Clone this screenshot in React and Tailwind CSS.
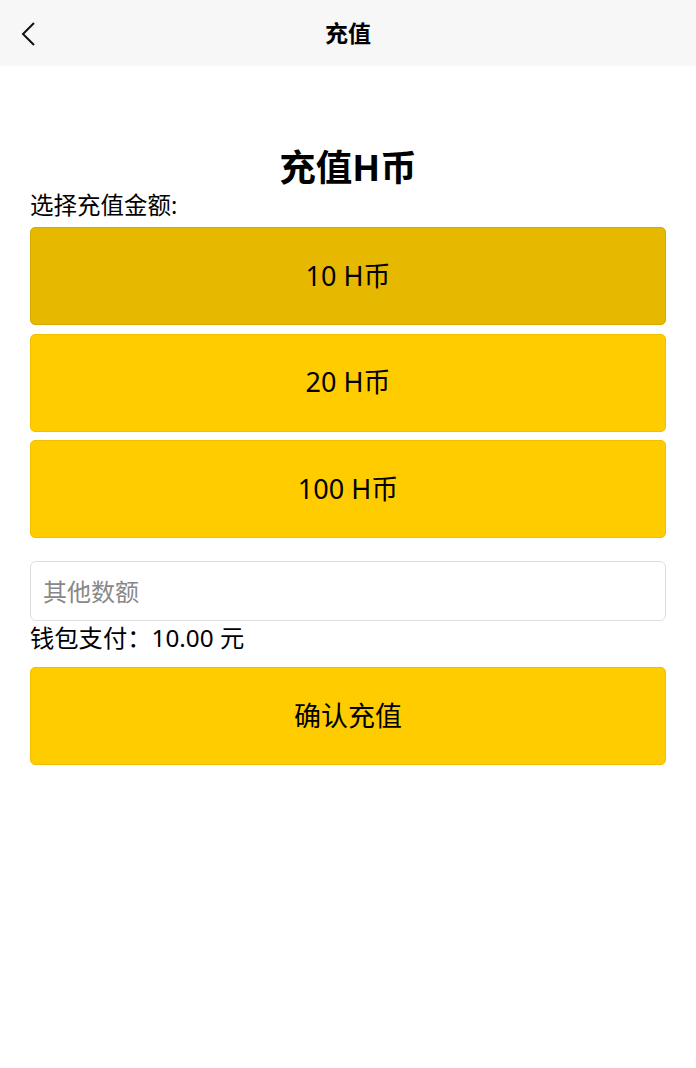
import React, { useState } from 'react'

export default function App() {
  const [amount, setAmount] = useState(10)
  const options = [10, 20, 100]

  return (
    <div className="min-h-[1068px] bg-white text-black" style={{ fontFamily: '"Noto Sans", "Noto Sans CJK SC", sans-serif' }}>
      <div className="h-[66px] bg-[#f7f7f7] flex items-center relative">
        <button className="absolute left-[16px] top-[20px] w-[24px] h-[28px] flex items-center justify-center">
          <svg width="18" height="28" viewBox="0 0 18 28" fill="none" stroke="#111" strokeWidth="2">
            <path d="M15 3 L4 14 L15 25" />
          </svg>
        </button>
        <h1 className="flex-1 text-center text-[23px] font-bold leading-none">充值</h1>
      </div>

      <div className="px-[30px] pt-[78px]">
        <h2 className="text-center text-[36.5px] font-bold leading-[46px]">充值H币</h2>
        <p className="text-[23.5px] leading-[30px]">选择充值金额:</p>

        <div className="flex flex-col gap-[8.5px] mt-[7px]">
          {options.map(v => (
            <button key={v} onClick={() => setAmount(v)}
              className={`h-[98px] rounded-[5px] border text-[27px] ${amount === v ? 'bg-[#e6b800] border-[#d4a900]' : 'bg-[#ffcc00] border-[#f0c000]'}`}>
              {v} H币
            </button>
          ))}
        </div>

        <input placeholder="其他数额"
          className="mt-[23px] w-full h-[60px] rounded-[6px] border border-[#dddddd] px-[12px] text-[24px] placeholder:text-[#888888] outline-none" />

        <p className="text-[24.3px] leading-[34px]">钱包支付：{amount.toFixed(2)} 元</p>

        <button className="mt-[12px] w-full h-[98px] rounded-[5px] border border-[#f0c000] bg-[#ffcc00] text-[27px]">
          确认充值
        </button>
      </div>
    </div>
  )
}
